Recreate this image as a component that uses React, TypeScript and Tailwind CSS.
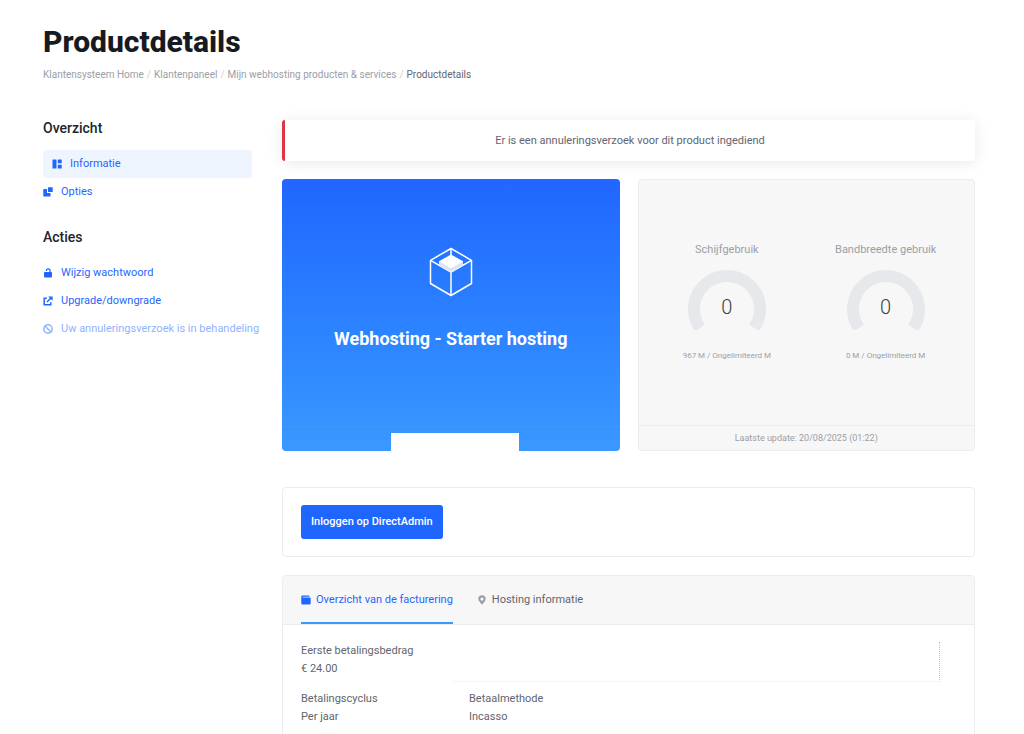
import { LuBan } from "react-icons/lu";

const crumbs = ["Klantensysteem Home", "Klantenpaneel", "Mijn webhosting producten & services"];

const usage = [
  { title: "Schijfgebruik", value: 0, label: "967 M / Ongelimiteerd M" },
  { title: "Bandbreedte gebruik", value: 0, label: "0 M / Ongelimiteerd M" },
];

const InfoIcon = () => (
  <svg viewBox="0 0 10 10" className="h-[10px] w-[10px]" fill="currentColor" aria-hidden="true">
    <rect x="0.5" y="0.5" width="4" height="9" rx="0.5" />
    <rect x="5.8" y="0.5" width="3.9" height="3.8" rx="0.5" />
    <rect x="5.8" y="5.7" width="3.9" height="3.8" rx="0.5" />
  </svg>
);

const OptionsIcon = () => (
  <svg viewBox="0 0 10 10" className="h-[10px] w-[10px]" fill="currentColor" aria-hidden="true">
    <rect x="5" y="0.3" width="4.7" height="4.7" rx="0.5" />
    <path d="M.8 2H4V6H7.5V9a.5.5 0 0 1-.5.5H.8A.5.5 0 0 1 .3 9V2.5A.5.5 0 0 1 .8 2Z" />
  </svg>
);

const LockIcon = () => (
  <svg viewBox="0 0 10 10" className="h-[10px] w-[10px]" fill="currentColor" aria-hidden="true">
    <rect x="1" y="4" width="8" height="5.5" rx="0.8" />
    <path d="M3.4 3V2.6a1.8 1.8 0 0 1 3.6 0V4.5" fill="none" stroke="currentColor" strokeWidth="1.3" />
  </svg>
);

const ShareIcon = () => (
  <svg viewBox="0 0 10 10" className="h-[10px] w-[10px]" fill="none" stroke="currentColor" strokeWidth="1.5" aria-hidden="true">
    <path d="M3.8 2.2H1.2V8.8H7.8V6.2M4 6 8 2" />
    <path d="M5.2.4H9.6V4.8Z" fill="currentColor" stroke="none" />
  </svg>
);

const WalletIcon = () => (
  <svg viewBox="0 0 10 10" className="h-[10px] w-[10px]" fill="currentColor" aria-hidden="true">
    <path d="M1.5.5H8.3V1.7H2.1a.4.4 0 0 0 0 .9H9a.7.7 0 0 1 .7.7V8.5a1 1 0 0 1-1 1H1.5a1.2 1.2 0 0 1-1.2-1.2V1.7A1.2 1.2 0 0 1 1.5.5Z" />
  </svg>
);

const PinIcon = () => (
  <svg viewBox="0 0 10 10" className="h-[10px] w-[10px]" fill="currentColor" aria-hidden="true">
    <path fillRule="evenodd" d="M5 .3A3.7 3.7 0 0 0 1.3 4C1.3 6.3 3.5 7.4 5 9.8 6.5 7.4 8.7 6.3 8.7 4A3.7 3.7 0 0 0 5 .3Zm0 2.2a1.6 1.6 0 1 1 0 3.2 1.6 1.6 0 0 1 0-3.2Z" />
  </svg>
);

const CubeLogo = () => (
  <svg viewBox="0 0 44 50" className="h-[50px] w-11" fill="none" strokeLinejoin="round" aria-hidden="true">
    <path d="M22 1.5 42.5 13.3V36.5L22 48.5 1.5 36.5V13.3ZM22 1.5V8M22 24V48.5M1.5 13.3 22 25 42.5 13.3" stroke="#fff" strokeWidth="1.5" />
    <path d="M10 14V18L22 25 34 18V14Z" fill="#dbe3f2" />
    <path d="M22 7.5 34 14.3 22 21.5 10 14.3Z" fill="#fff" />
  </svg>
);

const App = () => {
  const views = [
    { label: "Informatie", icon: InfoIcon, active: true },
    { label: "Opties", icon: OptionsIcon, active: false },
  ];

  return (
    <div className="min-h-screen bg-white pr-[49px] pl-[43px] font-[Roboto,'Liberation_Sans',sans-serif] text-[11px] leading-[18px] text-[#62656f]">
      <header className="pt-[25px]">
        <h1 className="text-[30px] leading-[34px] font-extrabold text-[#171a21]">Productdetails</h1>
        <nav aria-label="Breadcrumb" className="mt-2 text-[10px] leading-4 text-[#9c9ea6]">
          <ol className="flex">
            {crumbs.map((crumb) => (
              <li key={crumb}>
                <a href="#">{crumb}</a>
                <span className="px-[3px] text-[#d0d1d5]">/</span>
              </li>
            ))}
            <li className="text-[#62656f]">Productdetails</li>
          </ol>
        </nav>
      </header>

      <div className="mt-[37px] flex gap-[30px]">
        <aside className="w-[209px] shrink-0 text-[#1f66ff]">
          <h2 className="text-sm leading-4 font-medium text-[#22252d]">Overzicht</h2>
          <ul className="mt-[14px]">
            {views.map((view) => (
              <li key={view.label}>
                <a
                  href="#"
                  className={
                    view.active
                      ? "flex h-7 items-center gap-2 rounded-[3px] bg-[#eff5ff] px-[9px]"
                      : "flex h-7 items-center gap-2"
                  }
                >
                  <view.icon />
                  {view.label}
                </a>
              </li>
            ))}
          </ul>

          <h2 className="mt-[23px] text-sm leading-4 font-medium text-[#22252d]">Acties</h2>
          <ul className="mt-[14px]">
            <li>
              <a href="#" className="flex h-7 items-center gap-2">
                <LockIcon />
                Wijzig wachtwoord
              </a>
            </li>
            <li>
              <a href="#" className="flex h-7 items-center gap-2">
                <ShareIcon />
                Upgrade/downgrade
              </a>
            </li>
            <li className="flex h-7 items-center gap-2 whitespace-nowrap text-[#8fb3ff]">
              <LuBan size={10} strokeWidth={3.5} className="shrink-0" />
              Uw annuleringsverzoek is in behandeling
            </li>
          </ul>
        </aside>

        <main className="min-w-0 flex-1">
          <div role="alert" className="flex h-[41px] items-center justify-center rounded-[3px] border-l-[3px] border-[#dc3545] bg-white shadow-[0_2px_16px_rgba(0,0,0,0.09)]">
            Er is een annuleringsverzoek voor dit product ingediend
          </div>

          <div className="mt-[18px] grid grid-cols-2 gap-[18px]">
            <section className="flex h-[272px] flex-col items-center rounded-[4px] bg-linear-to-b from-[#2166ff] to-[#3a98ff] text-white">
              <div className="flex flex-1 flex-col items-center pt-[68px]">
                <CubeLogo />
                <h2 className="mt-[30px] text-lg leading-6 font-bold">Webhosting - Starter hosting</h2>
              </div>
              <div className="flex h-[25px] w-full items-end justify-center border-t border-white/5 pl-2">
                <div className="h-[18px] w-32 bg-white" />
              </div>
            </section>

            <section className="flex h-[272px] flex-col rounded-[4px] border border-[#ececee] bg-[#f7f7f7] text-[#9c9ea6]">
              <div className="flex flex-1 justify-center px-[9px] pt-[61px]">
                {usage.map((item) => (
                  <div key={item.title} className="flex flex-1 flex-col items-center">
                    <h3>{item.title}</h3>
                    <div className="relative mt-[11px]">
                      <svg viewBox="0 0 78 60" className="h-[60px] w-[78px]" fill="none" aria-hidden="true">
                        <path d="M12 58A33 33 0 1 1 66 58" stroke="#e6e8ec" strokeWidth="12" />
                      </svg>
                      <span className="absolute inset-x-0 top-[25px] text-center text-xl leading-6 font-light text-[#3b3e48]">
                        {item.value}
                      </span>
                    </div>
                    <p className="mt-5 text-[8px] leading-3">{item.label}</p>
                  </div>
                ))}
              </div>
              <p className="border-t border-[#ececee] text-center text-[9px] leading-6">
                Laatste update: 20/08/2025 (01:22)
              </p>
            </section>
          </div>

          <section className="mt-9 rounded-[4px] border border-[#ececee] px-[18px] py-[17px]">
            <button type="button" className="h-[34px] rounded-[3px] bg-[#1f66ff] px-[10px] font-medium text-white">
              Inloggen op DirectAdmin
            </button>
          </section>

          <section className="mt-[18px] rounded-t-[4px] border border-[#ececee] pb-9">
            <div role="tablist" className="flex h-12 gap-6 rounded-t-[3px] bg-[#f7f7f7] px-[18px] shadow-[0_1px_0_#ececee]">
              <button type="button" role="tab" aria-selected="true" className="flex items-center gap-[5px] border-b-2 border-[#3a98ff] pt-0.5 text-[#1f66ff]">
                <WalletIcon />
                Overzicht van de facturering
              </button>
              <button type="button" role="tab" aria-selected="false" className="flex items-center gap-[5px] border-b-2 border-transparent pt-0.5">
                <span className="text-[#9c9ea6]">
                  <PinIcon />
                </span>
                Hosting informatie
              </button>
            </div>

            <dl className="grid grid-cols-[168px_1fr] gap-y-3 px-[18px] pt-[18px]">
              <div>
                <dt>Eerste betalingsbedrag</dt>
                <dd>€ 24.00</dd>
              </div>
              <div className="mr-4 -mb-1 -ml-4 border-r border-b border-dotted border-r-[#a9c4ee] border-b-[#ececee]" />
              <div>
                <dt>Betalingscyclus</dt>
                <dd>Per jaar</dd>
              </div>
              <div>
                <dt>Betaalmethode</dt>
                <dd>Incasso</dd>
              </div>
            </dl>
          </section>
        </main>
      </div>
    </div>
  );
};

export default App;
